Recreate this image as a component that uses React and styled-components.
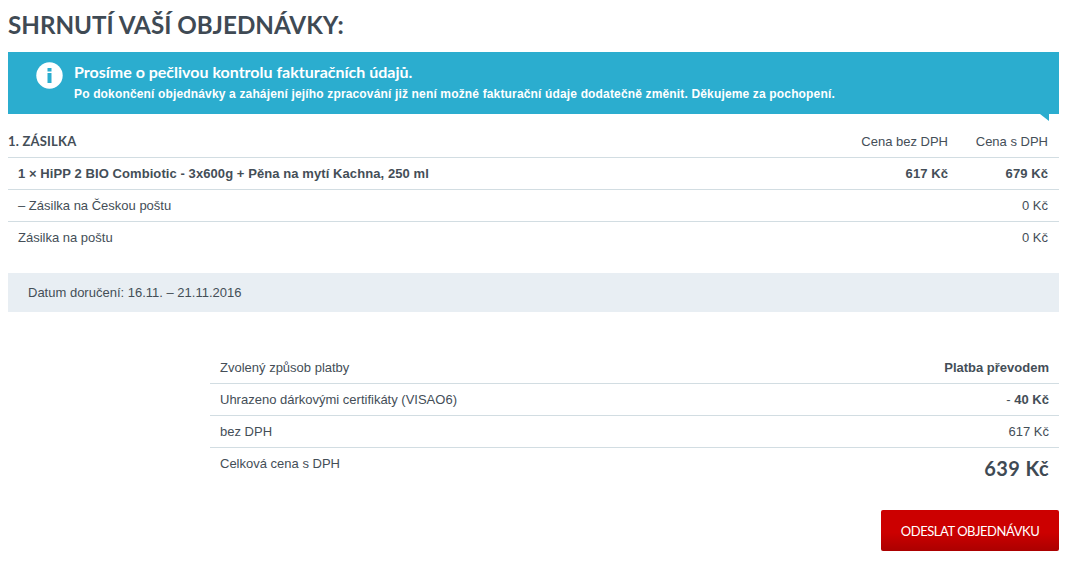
import styled, { createGlobalStyle } from "styled-components";

const GlobalStyle = createGlobalStyle`
  html, body {
    margin: 0;
    background: #fff;
  }
  body {
    font-family: "Liberation Sans", Arial, sans-serif;
    font-size: 13px;
    color: #444e57;
  }
`;

const Page = styled.div`
  width: 1051px;
  padding: 0 0 24px 8px;
`;

const Title = styled.h1`
  margin: 0;
  height: 52px;
  padding-top: 9px;
  box-sizing: border-box;
  font: 700 24.2px/32px Lato, sans-serif;
  color: #3f4a54;
`;

const Notice = styled.div`
  position: relative;
  display: flex;
  align-items: flex-start;
  gap: 11px;
  height: 62px;
  box-sizing: border-box;
  padding: 10px 28px;
  background: #2badcf;
  color: #fff;
  &::after {
    content: "";
    position: absolute;
    right: 10px;
    bottom: -7px;
    border-top: 7px solid #2badcf;
    border-left: 9px solid transparent;
  }
`;

const NoticeText = styled.div`
  strong {
    display: block;
    font: 700 16px/20px Lato, sans-serif;
  }
  span {
    display: block;
    margin-top: 5px;
    font: 700 12px/15px "Liberation Sans", sans-serif;
    letter-spacing: 0.155px;
  }
`;

const Table = styled.div`
  margin-left: ${(p) => p.$indent || 0}px;
`;

const Row = styled.div`
  display: flex;
  align-items: ${(p) => (p.$top ? "flex-start" : "center")};
  height: ${(p) => p.$height || 32}px;
  box-sizing: border-box;
  padding: ${(p) => p.$pad || 0}px ${(p) => p.$right || 10}px 0 10px;
  border-top: ${(p) => (p.$first ? "none" : "1px solid #d2dde2")};
  letter-spacing: ${(p) => (p.$bold ? "0.08px" : "0")};
  font-weight: ${(p) => (p.$bold ? 700 : 400)};
`;

const Name = styled.div`
  flex: 1;
`;

const Price = styled.div`
  width: ${(p) => p.$width || 100}px;
  text-align: right;
`;

const ShipmentTitle = styled.div`
  flex: 1;
  margin-left: -10px;
  font: 700 13px/16px Lato, sans-serif;
  letter-spacing: 0.2px;
`;

const Delivery = styled.div`
  display: flex;
  align-items: center;
  height: 39px;
  margin: 20px 0 39px;
  padding-left: 20px;
  background: #e8eef3;
`;

const Total = styled.div`
  font: 700 20px/24px Lato, sans-serif;
  letter-spacing: 0.4px;
  color: #3f4a54;
`;

const Actions = styled.div`
  display: flex;
  justify-content: flex-end;
  margin-top: 16px;
`;

const Submit = styled.button`
  width: 178px;
  height: 41px;
  border: 0;
  border-radius: 2px;
  background: linear-gradient(#cc0000 55%, #ab0000);
  color: #fff;
  font: 400 13px/16px Lato, sans-serif;
  letter-spacing: -0.45px;
  text-transform: uppercase;
`;

const InfoIcon = () => (
  <svg width="27" height="27" viewBox="0 0 27 27" aria-hidden="true">
    <circle cx="13.5" cy="13.5" r="13.2" fill="#fff" />
    <rect x="11.5" y="6" width="4" height="3.5" fill="#2badcf" />
    <rect x="11.5" y="11" width="4" height="10" fill="#2badcf" />
  </svg>
);

const App = () => (
  <Page>
    <GlobalStyle />
    <Title>SHRNUTÍ VAŠÍ OBJEDNÁVKY:</Title>
    <Notice>
      <InfoIcon />
      <NoticeText>
        <strong>Prosíme o pečlivou kontrolu fakturačních údajů.</strong>
        <span>
          Po dokončení objednávky a zahájení jejího zpracování již není možné
          fakturační údaje dodatečně změnit. Děkujeme za pochopení.
        </span>
      </NoticeText>
    </Notice>
    <Table>
      <Row $first $height={43} $pad={11} $right={11}>
        <ShipmentTitle>1. ZÁSILKA</ShipmentTitle>
        <Price>Cena bez DPH</Price>
        <Price>Cena s DPH</Price>
      </Row>
      <Row $bold $right={11}>
        <Name>1 × HiPP 2 BIO Combiotic - 3x600g + Pěna na mytí Kachna, 250 ml</Name>
        <Price>617 Kč</Price>
        <Price>679 Kč</Price>
      </Row>
      <Row $right={11}>
        <Name>– Zásilka na Českou poštu</Name>
        <Price>0 Kč</Price>
      </Row>
      <Row $right={11}>
        <Name>Zásilka na poštu</Name>
        <Price>0 Kč</Price>
      </Row>
    </Table>
    <Delivery>Datum doručení: 16.11. – 21.11.2016</Delivery>
    <Table $indent={202}>
      <Row $first>
        <Name>Zvolený způsob platby</Name>
        <Price $width={200}>
          <b>Platba převodem</b>
        </Price>
      </Row>
      <Row>
        <Name>Uhrazeno dárkovými certifikáty (VISAO6)</Name>
        <Price>
          - <b>40 Kč</b>
        </Price>
      </Row>
      <Row>
        <Name>bez DPH</Name>
        <Price>617 Kč</Price>
      </Row>
      <Row $top $height={47} $pad={8}>
        <Name>Celková cena s DPH</Name>
        <Total>639 Kč</Total>
      </Row>
    </Table>
    <Actions>
      <Submit>Odeslat objednávku</Submit>
    </Actions>
  </Page>
);

export default App;
